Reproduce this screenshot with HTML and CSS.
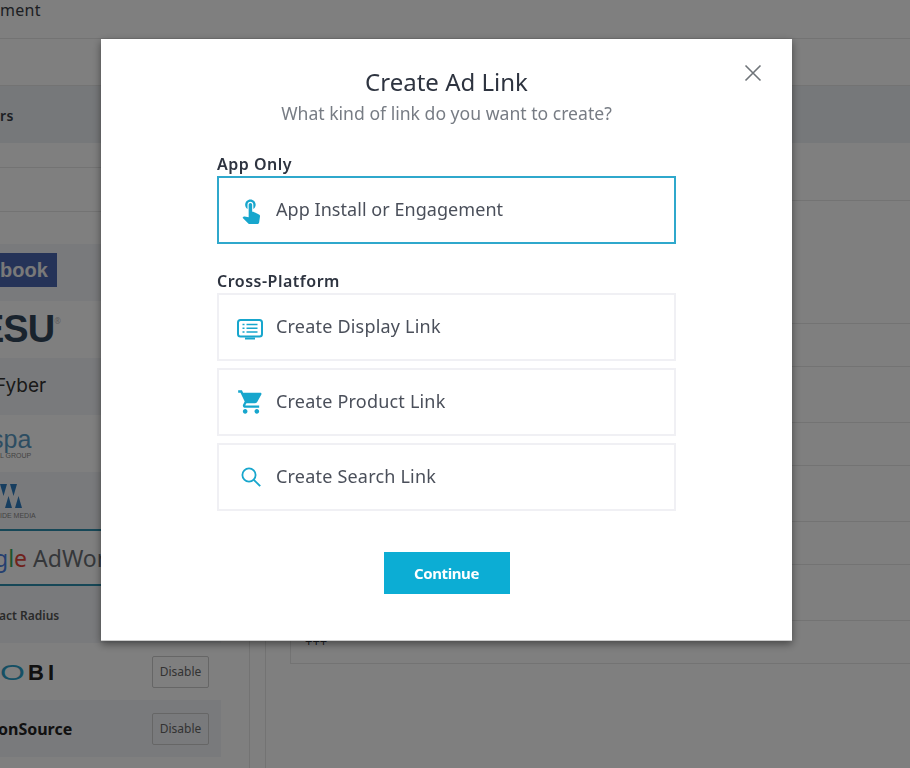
FILE: index.html
```html
<!DOCTYPE html>
<html lang="en">
<head>
    <meta charset="UTF-8">
    <meta name="viewport" content="width=device-width, initial-scale=1.0">
    <title>Create Ad Link</title>
    <link rel="stylesheet" href="styles.css">
</head>
<body>
    <div class="page">
        <div class="topbar"><span class="crumb">ment</span></div>
        <div class="subbar"></div>
        <div class="band"><span class="crumb">rs</span></div>
        <div class="columns">
            <div class="sidebar">
                <div class="sideRow sideRowShort"></div>
                <div class="sideRow sideRowMid"></div>
                <div class="sideGap"></div>

                <div class="network tinted network-start"><span class="logo logoFacebook">book</span></div>
                <div class="network network-start"><span class="logo logoEsu">ESU</span><sup class="reg">®</sup></div>
                <div class="network tinted"><span class="logo logoFyber">Fyber</span></div>
                <div class="network network-stack">
                    <span class="logo logoSpa">spa</span>
                    <span class="logo logoTiny">L GROUP</span>
                </div>
                <div class="network tinted network-stack network-media">
                    <svg class="logoTriangles" viewBox="0 0 24 24" width="24" height="24">
                        <path d="M0 0h7l-3.5 12zM10 0h7l-3.5 12zM5 24l3.5-12 3.5 12zM15 24l3.5-12 3.5 12z" fill="#2f7cc0"/>
                    </svg>
                    <span class="logo logoTiny logoMedia">IDE MEDIA</span>
                </div>
                <div class="network selected">
                    <span class="logo logoGoogle"><b class="gBlue">g</b><b class="gGreen">l</b><b class="gRed">e</b> <b class="gGrey">AdWords</b></span>
                </div>
                <div class="network tinted"><span class="logo logoRadius">act Radius</span></div>
                <div class="network">
                    <span class="logo logoMobi"><b class="oTeal">O</b><span class="mobiRest">BI</span></span>
                    <button class="disableBtn">Disable</button>
                </div>
                <div class="network tinted">
                    <span class="logo logoIron">onSource</span>
                    <button class="disableBtn">Disable</button>
                </div>
            </div>
            <div class="main">
                <div class="mainHead"></div>
                <div class="field"></div>
                <div class="field"></div>
                <div class="field"></div>
                <div class="field fieldText">+++</div>
            </div>
        </div>
    </div>

    <div class="overlay">
        <div class="modal">
            <button class="closeBtn" aria-label="Close">
                <svg viewBox="0 0 18 18" width="18" height="18"><path d="M1.5 1.5l15 15M16.5 1.5l-15 15" stroke="#6f7479" stroke-width="1.6" fill="none"/></svg>
            </button>
            <h1>Create Ad Link</h1>
            <p class="subtitle">What kind of link do you want to create?</p>

            <div class="options">
                <h2>App Only</h2>
                <a class="option active">
                    <span class="optionIcon">
                        <svg viewBox="0 0 24 24" width="28" height="28"><path d="M9 11.24V7.5C9 6.12 10.12 5 11.5 5S14 6.12 14 7.5v3.74c1.21-.81 2-2.18 2-3.74C16 5.01 13.99 3 11.5 3S7 5.01 7 7.5c0 1.56.79 2.93 2 3.74zm9.84 4.63l-4.54-2.26c-.17-.07-.35-.11-.54-.11H13v-6c0-.83-.67-1.5-1.5-1.5S10 6.67 10 7.5v10.74l-3.43-.72c-.08-.01-.15-.03-.24-.03-.31 0-.59.13-.79.33l-.79.8 4.94 4.94c.27.27.65.44 1.06.44h6.79c.75 0 1.33-.55 1.44-1.28l.75-5.27c.01-.07.02-.14.02-.2 0-.62-.38-1.16-.91-1.38z" fill="#17a6cd"/></svg>
                    </span>
                    App Install or Engagement
                </a>

                <h2 class="second">Cross-Platform</h2>
                <div class="optionList">
                    <a class="option">
                        <span class="optionIcon iconDisplay">
                            <svg viewBox="0 0 26 22" width="26" height="22">
                                <rect x="1" y="1" width="24" height="16.5" rx="2.5" fill="none" stroke="#17a6cd" stroke-width="2"/>
                                <path d="M5.5 5.5h2M9.5 5.5h11M5.5 9.2h2M9.5 9.2h11M5.5 13h2M9.5 13h11" stroke="#17a6cd" stroke-width="1.5"/>
                                <path d="M8 18.5h10v2H8z" fill="#17a6cd"/>
                            </svg>
                        </span>
                        Create Display Link
                    </a>
                    <a class="option">
                        <span class="optionIcon">
                            <svg viewBox="0 0 24 24" width="28" height="28"><path d="M7 18c-1.1 0-1.99.9-1.99 2S5.9 22 7 22s2-.9 2-2-.9-2-2-2zM1 2v2h2l3.6 7.59-1.35 2.45c-.16.28-.25.61-.25.96 0 1.1.9 2 2 2h12v-2H7.42c-.14 0-.25-.11-.25-.25l.03-.12.9-1.63h7.45c.75 0 1.41-.41 1.75-1.03l3.58-6.49c.08-.14.12-.31.12-.48 0-.55-.45-1-1-1H5.21l-.94-2H1zm16 16c-1.1 0-1.99.9-1.99 2s.89 2 1.99 2 2-.9 2-2-.9-2-2-2z" fill="#17a6cd"/></svg>
                        </span>
                        Create Product Link
                    </a>
                    <a class="option">
                        <span class="optionIcon">
                            <svg viewBox="0 0 22 22" width="22" height="22">
                                <circle cx="9" cy="9" r="6.6" fill="none" stroke="#17a6cd" stroke-width="1.8"/>
                                <path d="M13.8 13.8l6.4 6.4" stroke="#17a6cd" stroke-width="1.9"/>
                            </svg>
                        </span>
                        Create Search Link
                    </a>
                </div>
            </div>

            <button class="continueBtn">Continue</button>
        </div>
    </div>
</body>
</html>
```

FILE: styles.css
```css
html, body {
    height: 100%;
}
body {
    margin: 0px;
    background-color: #fff;
    font-family: "Noto Sans", sans-serif;
    font-size: 14px;
    color: #2e3440;
    overflow: hidden;
}
.page {
    height: 768px;
    overflow: hidden;
}
.crumb {
    font-size: 16px;
    letter-spacing: 0.3px;
    color: #3a3f47;
}
.topbar {
    height: 39px;
    border-bottom: 1px solid #e6e6e6;
    box-sizing: border-box;
    line-height: 20px;
}
.subbar {
    height: 47px;
    border-bottom: 1px solid #e6e6e6;
    box-sizing: border-box;
}
.band {
    height: 57px;
    background-color: #edf0f4;
    line-height: 60px;
    font-size: 14px;
}
.band .crumb {
    font-size: 14px;
    font-weight: 600;
}
.columns {
    display: flex;
    height: 625px;
}

/* left column with the ad networks */
.sidebar {
    width: 250px;
    flex: none;
    box-sizing: border-box;
    border-right: 1px solid #e6e6e6;
    padding-right: 28px;
}
.sideRow {
    border-bottom: 1px solid #e6e6e6;
    box-sizing: border-box;
}
.sideRowShort {
    height: 25px;
}
.sideRowMid {
    height: 44px;
}
.sideGap {
    height: 32px;
}
.network {
    height: 57px;
    box-sizing: border-box;
    display: flex;
    align-items: center;
    justify-content: space-between;
    padding-right: 12px;
    white-space: nowrap;
    overflow: hidden;
}
.network-start {
    justify-content: flex-start;
}
.network-stack {
    flex-direction: column;
    align-items: flex-start;
    justify-content: center;
}
.network-media {
    padding-top: 3px;
}
.tinted {
    background-color: #f3f5f8;
}
.selected {
    border-top: 2px solid #2d8fae;
    border-bottom: 2px solid #2d8fae;
}
.logo {
    display: block;
    font-family: "Liberation Sans", sans-serif;
}
.logoFacebook {
    background-color: #4a66b0;
    color: #f2f2f2;
    font-weight: bold;
    font-size: 20px;
    line-height: 34px;
    width: 57px;
    box-sizing: border-box;
    text-align: right;
    padding-right: 13px;
    margin-top: -6px;
}
.logoEsu {
    font-size: 38px;
    font-weight: bold;
    letter-spacing: -1px;
    color: #33475b;
    margin-left: -21px;
}
.reg {
    font-size: 8px;
    color: #bbb;
    align-self: flex-start;
    margin-top: 14px;
}
.logoFyber {
    font-size: 19px;
    color: #333;
    margin-left: -5px;
    margin-top: -3px;
    font-family: "Inter", sans-serif;
}
.logoSpa {
    font-size: 25px;
    line-height: 24px;
    color: #5b9bc4;
    margin-left: -9px;
}
.logoTiny {
    font-size: 7px;
    line-height: 10px;
    color: #888;
}
.logoMedia {
    margin-top: 3px;
}
.logoGoogle {
    font-family: "Noto Sans", sans-serif;
    font-size: 23px;
    margin-left: -6px;
}
.logoGoogle b {
    font-weight: normal;
}
.gBlue {
    color: #4a7fe0;
}
.gGreen {
    color: #3aa757;
}
.gRed {
    color: #e0453a;
}
.gGrey {
    color: #6b6f75;
}
.logoRadius {
    font-family: "Noto Sans", sans-serif;
    font-size: 12px;
    font-weight: 600;
    color: #555;
    margin-left: -1px;
    margin-top: 2px;
}
.logoMobi {
    display: flex;
    font-size: 22px;
    font-weight: bold;
    color: #222;
    margin-top: 2px;
}
.oTeal {
    display: block;
    width: 28px;
    font-weight: normal;
    color: #2b9fc9;
    transform: scaleX(1.45);
    transform-origin: left;
}
.mobiRest {
    letter-spacing: 4px;
}
.logoIron {
    font-family: "Noto Sans", sans-serif;
    font-size: 16px;
    font-weight: 700;
    color: #222;
    margin-left: -2px;
}
.disableBtn {
    width: 57px;
    height: 32px;
    padding: 0px;
    background: none;
    border: 1px solid #ccc;
    border-radius: 2px;
    font-family: "Noto Sans", sans-serif;
    font-size: 12px;
    color: #666;
}

/* right column, only its lines show behind the dialog */
.main {
    flex: 1;
    margin-left: 15px;
    border-left: 1px solid #e6e6e6;
    padding-left: 24px;
}
.mainHead {
    height: 58px;
    margin-left: -24px;
    border-bottom: 1px solid #e6e6e6;
    box-sizing: border-box;
    margin-bottom: 122px;
}
.field {
    height: 44px;
    border: 1px solid #e6e6e6;
    border-right: none;
    box-sizing: border-box;
    margin-bottom: 55px;
}
.fieldText {
    padding-left: 14px;
    line-height: 40px;
    font-size: 13px;
}

/* dialog */
.overlay {
    position: fixed;
    top: 0px;
    left: 0px;
    right: 0px;
    bottom: 0px;
    background-color: rgba(0, 0, 0, 0.5);
}
.modal {
    position: relative;
    width: 691px;
    height: 602px;
    margin: 39px 0px 0px 101px;
    box-sizing: border-box;
    padding-top: 26px;
    background-color: #fff;
    border-bottom: 1px solid #ccc;
    box-shadow: 0px 3px 8px rgba(0, 0, 0, 0.45);
    text-align: center;
}
.closeBtn {
    position: absolute;
    top: 25px;
    right: 30px;
    padding: 0px;
    border: none;
    background: none;
    line-height: 0;
}
h1 {
    margin: 0px;
    font-size: 24px;
    line-height: 34px;
    font-weight: 400;
    color: #2e3440;
}
.subtitle {
    margin: 0px;
    font-size: 17.6px;
    line-height: 28px;
    font-weight: 400;
    color: #777c84;
}
.options {
    width: 459px;
    margin: 27px auto 0px;
    text-align: left;
}
h2 {
    margin: 0px 0px 2px;
    font-size: 16px;
    line-height: 20px;
    font-weight: 600;
    letter-spacing: 0.5px;
    color: #2e3440;
}
h2.second {
    margin-top: 27px;
}
.optionList {
    display: flex;
    flex-direction: column;
    gap: 7px;
}
.option {
    display: flex;
    align-items: center;
    height: 68px;
    box-sizing: border-box;
    padding-bottom: 2px;
    border: 2px solid #f0f0f4;
    font-size: 18px;
    letter-spacing: 0.2px;
    color: #4a4f5a;
}
.active {
    border-color: #2fa8cc;
    letter-spacing: 0.05px;
}
.optionIcon {
    width: 57px;
    flex: none;
    display: flex;
    justify-content: center;
    padding-left: 6px;
    padding-top: 2px;
    box-sizing: border-box;
}
.iconDisplay {
    padding-top: 7px;
    padding-right: 2px;
}
.continueBtn {
    display: block;
    width: 126px;
    height: 42px;
    margin: 41px auto 0px;
    padding: 0px;
    border: none;
    background-color: #0cadd4;
    color: #fff;
    font-family: "Noto Sans", sans-serif;
    font-size: 15px;
    font-weight: 700;
    letter-spacing: -0.4px;
}
```
